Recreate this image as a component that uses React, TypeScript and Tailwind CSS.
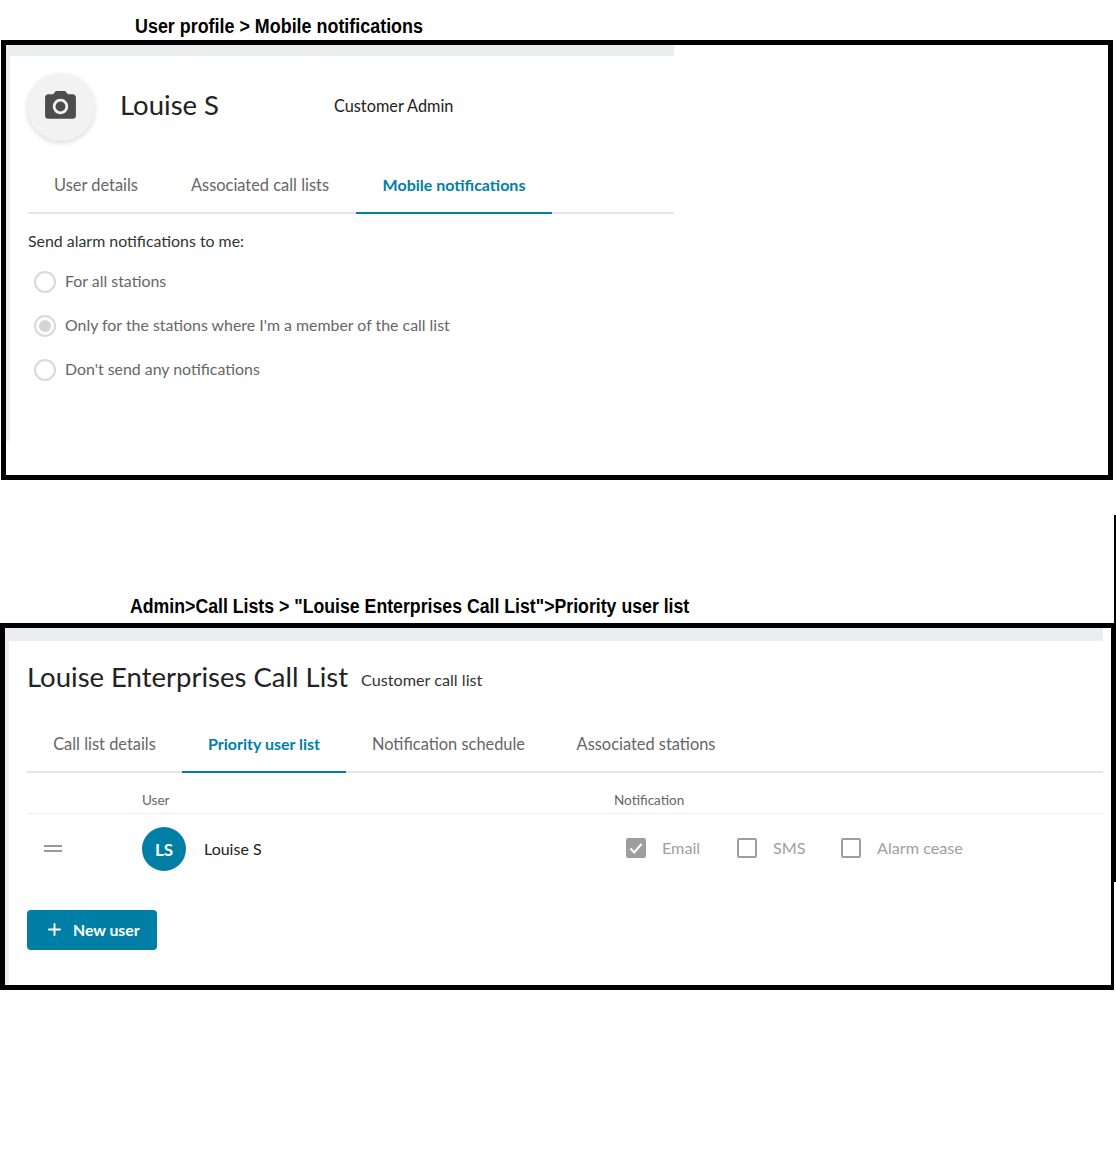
import { Plus } from "lucide-react";

function Tab({ label, active, className }: { label: string; active?: boolean; className: string }) {
  return (
    <div
      className={`flex h-[calc(100%+2px)] items-center justify-center border-b-2 ${className} ${
        active ? "border-[#007fa6] text-[16px] font-bold text-[#007fa6]" : "border-transparent text-[16.4px] text-[#666666]"
      }`}
    >
      {label}
    </div>
  );
}

function Radio({ label, checked }: { label: string; checked?: boolean }) {
  return (
    <div className="flex h-[44px] items-center">
      <div className="ml-[6px] mr-[9px] mt-[1px] flex h-[22px] w-[22px] items-center justify-center rounded-full border-2 border-[#d9d9d9]">
        {checked && <div className="h-[12px] w-[12px] rounded-full bg-[#d4d4d4]" />}
      </div>
      <span className="-mt-[2px] text-[15.9px] text-[#666666]">{label}</span>
    </div>
  );
}

function Check({ label, checked, className }: { label: string; checked?: boolean; className: string }) {
  return (
    <div className={`flex items-center ${className}`}>
      {checked ? (
        <div className="flex h-[20px] w-[20px] items-center justify-center rounded-[2px] bg-[#9e9e9e]">
          <svg width="16" height="16" viewBox="0 0 16 16" fill="none">
            <path d="M2.5 8.5 L6.2 12.5 L13.5 4" stroke="#ffffff" strokeWidth="2" />
          </svg>
        </div>
      ) : (
        <div className="h-[20px] w-[20px] rounded-[2px] border-2 border-[#9e9e9e]" />
      )}
      <span className="ml-[16px] text-[16.2px] text-[#a0a0a0]">{label}</span>
    </div>
  );
}

export default function App() {
  return (
    <div className="relative h-[1156px] w-[1116px] overflow-hidden bg-white font-['Lato',sans-serif]">
      {/* stray line right of the second frame, part of the annotated screenshot */}
      <div className="absolute left-[1114px] top-[515px] h-[367px] w-[2px] bg-black" />

      <div className="flex h-[40px] items-center pl-[135px] pt-[11px] font-['Liberation_Sans',sans-serif] text-[20px] font-bold text-black">
        <span className="origin-left scale-x-[0.895] whitespace-nowrap">User profile &gt; Mobile notifications</span>
      </div>

      <section className="ml-[1px] h-[440px] w-[1112px] border-[5px] border-black">
        <div className="h-[11px] w-[668px] bg-[#ebeef1]" />
        <div className="flex">
          <div className="h-[385px] w-[4px] bg-[#eceef0]" />
          <div className="w-[664px] pl-[18px]">
            <div className="-ml-[1px] flex items-center pt-[17px]">
              <div className="flex h-[68px] w-[68px] items-center justify-center rounded-full bg-[#f2f2f3] shadow-[0_2px_5px_rgba(0,0,0,0.15)]">
                <svg className="-mt-[2px] -ml-[1px]" width="37" height="37" viewBox="0 0 24 24" fill="#4d4d4d">
                  <circle cx="12" cy="12" r="3.2" />
                  <path d="M9 2L7.17 4H4c-1.1 0-2 .9-2 2v12c0 1.1.9 2 2 2h16c1.1 0 2-.9 2-2V6c0-1.1-.9-2-2-2h-3.17L15 2H9zm3 15c-2.76 0-5-2.24-5-5s2.24-5 5-5 5 2.24 5 5-2.24 5-5 5z" />
                </svg>
              </div>
              <h1 className="mb-[5px] ml-[25px] w-[214px] text-[27.5px] text-[#222222]">Louise S</h1>
              <span className="-mt-[2px] text-[16.3px] text-[#222222]">Customer Admin</span>
            </div>
            <div className="mt-[13px] flex h-[60px] border-b-2 border-[#e4e5e6]">
              <Tab label="User details" className="w-[136px] pt-[4px]" />
              <Tab label="Associated call lists" className="w-[192px] pt-[4px]" />
              <Tab label="Mobile notifications" active className="w-[196px] pt-[4px]" />
            </div>
            <p className="mt-[15px] text-[15.9px] text-[#333333]">Send alarm notifications to me:</p>
            <div className="mt-[7px]">
              <Radio label="For all stations" />
              <Radio label="Only for the stations where I'm a member of the call list" checked />
              <Radio label="Don't send any notifications" />
            </div>
          </div>
        </div>
      </section>

      <div className="mt-[115px] flex h-[28px] items-center pb-[6px] pl-[130px] font-['Liberation_Sans',sans-serif] text-[20px] font-bold text-black">
        <span className="origin-left scale-x-[0.885] whitespace-nowrap">
          Admin&gt;Call Lists &gt; "Louise Enterprises Call List"&gt;Priority user list
        </span>
      </div>

      <section className="h-[367px] w-[1114px] border-y-[5px] border-l-[5px] border-r-[3px] border-black">
        <div className="h-[13px] w-[1098px] bg-[#ebeef1]" />
        <div className="flex">
          <div className="h-[344px] w-[4px] bg-[#eceef0]" />
          <div className="w-[1094px] pl-[18px]">
            <div className="flex h-[71px] items-center pt-[1px]">
              <h1 className="text-[27.5px] text-[#222222]">Louise Enterprises Call List</h1>
              <span className="ml-[13px] mt-[6px] text-[16.2px] text-[#333333]">Customer call list</span>
            </div>
            <div className="flex h-[61px] border-b-2 border-[#e4e5e6]">
              <Tab label="Call list details" className="w-[155px] pt-[5px]" />
              <Tab label="Priority user list" active className="w-[164px] pt-[5px]" />
              <Tab label="Notification schedule" className="w-[205px] pt-[5px]" />
              <Tab label="Associated stations" className="w-[190px] pt-[5px]" />
            </div>
            <div className="grid h-[41px] grid-cols-[115px_472px_1fr] items-center border-b border-[#eeeeee] pt-[14px] text-[13.5px] text-[#666666]">
              <span />
              <span>User</span>
              <span>Notification</span>
            </div>
            <div className="grid h-[70px] grid-cols-[115px_472px_1fr] items-center">
              <div className="mb-[2px] ml-[17px] flex w-[18px] flex-col gap-[3px]">
                <div className="h-[2px] bg-[#999999]" />
                <div className="h-[2px] bg-[#999999]" />
              </div>
              <div className="flex items-center">
                <div className="flex h-[44px] w-[44px] items-center justify-center rounded-full bg-[#007fa6] pt-[2px] text-[17px] font-bold text-white">
                  LS
                </div>
                <span className="mb-[1px] ml-[18px] text-[16px] text-[#222222]">Louise S</span>
              </div>
              <div className="mb-[2px] flex items-center">
                <Check label="Email" checked className="ml-[12px] w-[111px]" />
                <Check label="SMS" className="w-[104px]" />
                <Check label="Alarm cease" className="" />
              </div>
            </div>
            <button className="mt-[26px] flex h-[40px] w-[130px] items-center rounded-[4px] bg-[#007fa6] pb-[1px] pl-[18px] text-[15.8px] font-bold text-white">
              <Plus size={19} strokeWidth={2.4} className="mr-[9px]" />
              New user
            </button>
          </div>
        </div>
      </section>
    </div>
  );
}
